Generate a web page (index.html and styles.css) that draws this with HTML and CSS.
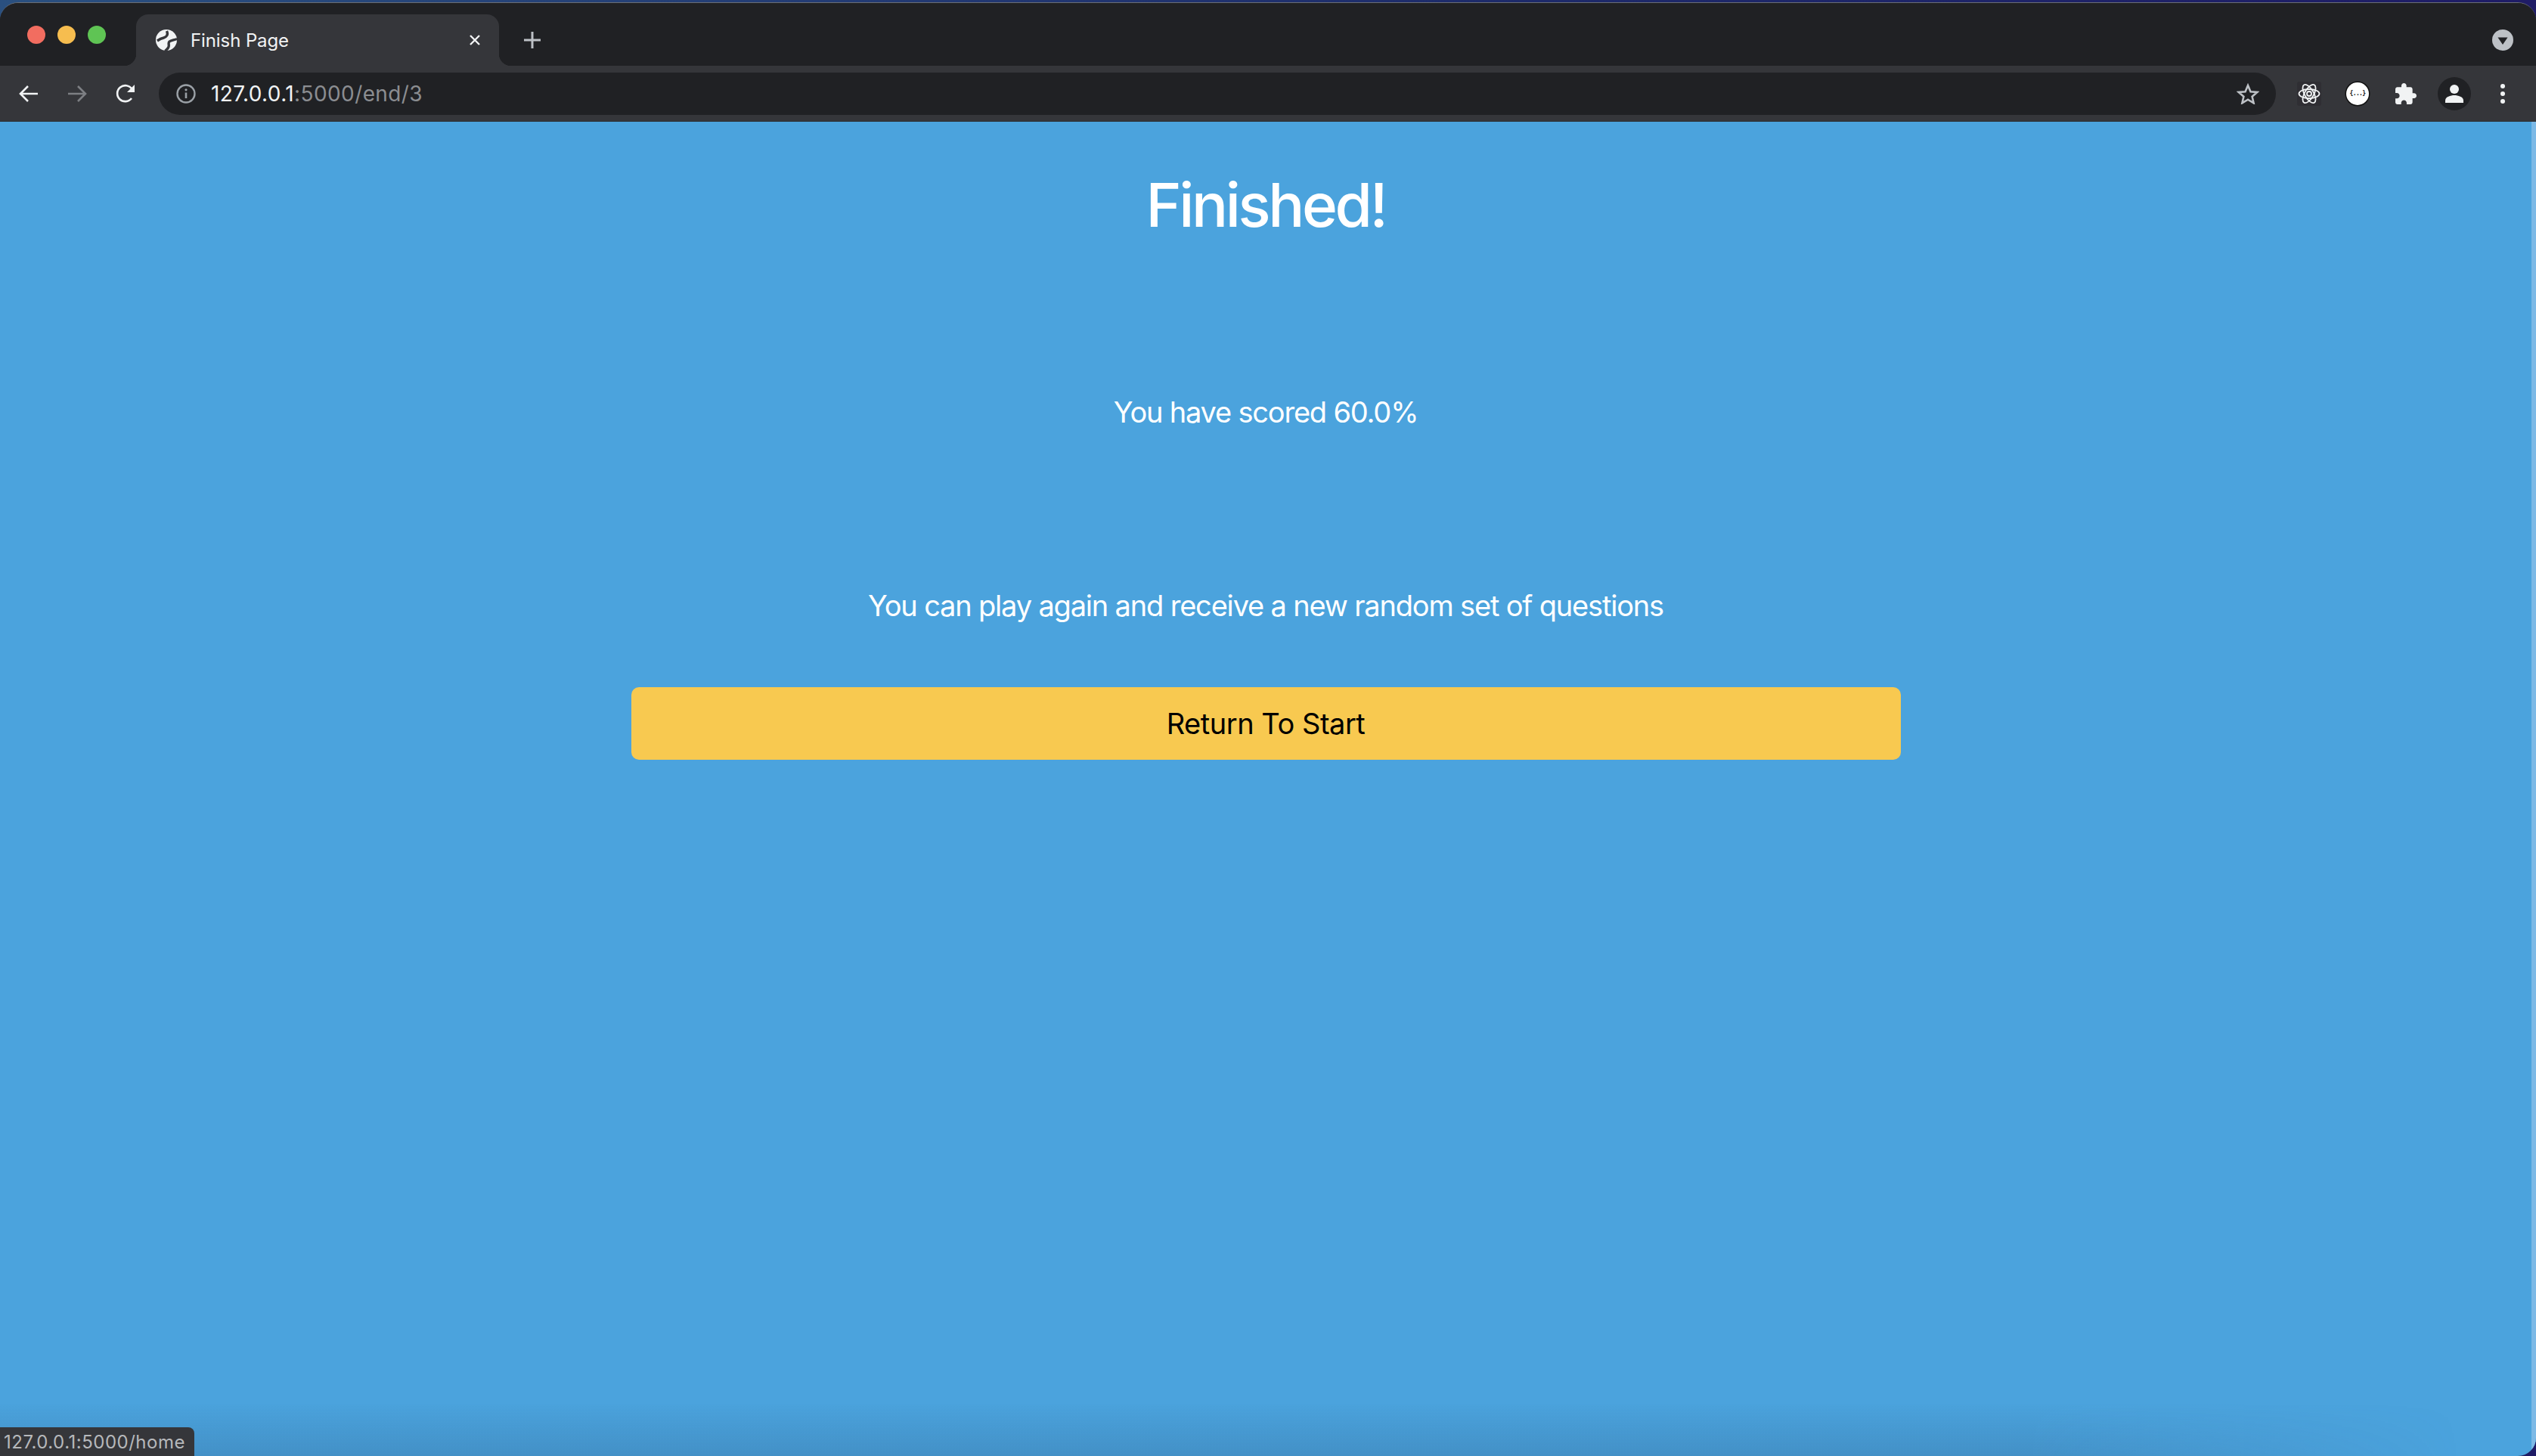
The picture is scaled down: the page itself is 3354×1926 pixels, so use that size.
FILE: index.html
```html
<!doctype html>
<html lang="en">
<head>
<meta charset="utf-8">
<title>Finish Page</title>
<link rel="stylesheet" href="styles.css">
</head>
<body>

<div class="window">

  <!-- ---------- tab strip ---------- -->
  <div class="tabstrip">
    <div class="lights">
      <span class="light red"></span>
      <span class="light yellow"></span>
      <span class="light green"></span>
    </div>
    <div class="tab">
      <svg class="globe" viewBox="0 0 28 28">
        <circle cx="14" cy="14" r="14" fill="#f1f3f4"/>
        <g stroke="#35363a" stroke-width="3.400" fill="none">
          <path d="M14.500 2C17 7 14 10 10.500 11 8 11.500 5.500 12.500 2 15"/>
          <path d="M28 12.500C24 14 20 14.500 18 16 16 18 18 20 17 23 16.500 25 15 26 12.500 28.500"/>
        </g>
      </svg>
      <span class="tab-title">Finish Page</span>
      <svg class="tab-close" viewBox="0 0 16 16">
        <path d="M2 2l12 12M14 2L2 14" stroke="#f1f3f4" stroke-width="2.400" fill="none"/>
      </svg>
    </div>
    <svg class="newtab" viewBox="0 0 24 24">
      <path d="M12 1v22M1 12h22" stroke="#bdc1c6" stroke-width="3" fill="none"/>
    </svg>
    <div class="tabsearch">
      <svg viewBox="0 0 28 28">
        <circle cx="14" cy="14" r="14" fill="#bdc1c6"/>
        <path d="M7.500 10.500h13L14 20z" fill="#202124"/>
      </svg>
    </div>
  </div>

  <!-- ---------- toolbar ---------- -->
  <div class="toolbar">
    <div class="navbtns">
      <svg class="navicon" viewBox="0 0 28 28">
        <path d="M26 14H4M13 4L3 14l10 10" stroke="#f1f3f4" stroke-width="2.600" fill="none"/>
      </svg>
      <svg class="navicon" viewBox="0 0 28 28">
        <path d="M2 14h22M15 4l10 10-10 10" stroke="#7d7f83" stroke-width="2.600" fill="none"/>
      </svg>
      <svg class="navicon" viewBox="0 0 28 28">
        <path d="M22 20a10.500 10.500 0 1 1 .5-12" stroke="#f1f3f4" stroke-width="2.600" fill="none"/>
        <path d="M26 2v10H16z" fill="#f1f3f4"/>
      </svg>
    </div>
    <div class="omnibox">
      <svg class="info" viewBox="0 0 26 26">
        <circle cx="13" cy="13" r="11.500" stroke="#9aa0a6" stroke-width="2.400" fill="none"/>
        <path d="M13 11.500v7.500" stroke="#9aa0a6" stroke-width="2.600"/>
        <circle cx="13" cy="7.800" r="1.600" fill="#9aa0a6"/>
      </svg>
      <span class="url"><span class="host">127.0.0.1</span>:5000/end/3</span>
      <svg class="star" viewBox="0 0 30 28">
        <path d="M15 3l3.500 8.200 8.800.7-6.700 5.800 2 8.600L15 21.700l-7.600 4.600 2-8.600L2.700 11.900l8.800-.7z" stroke="#bdc1c6" stroke-width="2.600" fill="none"/>
      </svg>
    </div>
    <div class="extensions">
      <div class="ext ext-react">
        <svg viewBox="0 0 32 32">
          <g stroke="#f1f3f4" stroke-width="1.800" fill="none">
            <ellipse cx="16" cy="16" rx="13.500" ry="6"/>
            <ellipse cx="16" cy="16" rx="13.500" ry="6" transform="rotate(60 16 16)"/>
            <ellipse cx="16" cy="16" rx="13.500" ry="6" transform="rotate(120 16 16)"/>
            <circle cx="16" cy="16" r="3"/>
          </g>
        </svg>
      </div>
      <div class="ext"><span class="json-badge">{...}</span></div>
      <div class="ext">
        <svg class="puzzle" viewBox="2 1 21 21">
          <path fill="#f1f3f4" d="M20.500 11H19V7c0-1.100-.9-2-2-2h-4V3.500C13 2.120 11.880 1 10.500 1S8 2.120 8 3.500V5H4c-1.100 0-1.990.9-1.990 2v3.800H3.500c1.490 0 2.700 1.210 2.700 2.700s-1.210 2.700-2.700 2.700H2V20c0 1.100.9 2 2 2h3.800v-1.500c0-1.490 1.210-2.700 2.700-2.700 1.490 0 2.700 1.210 2.700 2.700V22H17c1.100 0 2-.9 2-2v-4h1.500c1.380 0 2.500-1.120 2.500-2.500S21.880 11 20.500 11z"/>
        </svg>
      </div>
      <div class="ext">
        <div class="avatar">
          <svg viewBox="0 0 24 24">
            <circle cx="12" cy="6" r="6" fill="#f1f3f4"/>
            <path d="M0 24v-3c0-5 7-7 12-7s12 2 12 7v3z" fill="#f1f3f4"/>
          </svg>
        </div>
      </div>
      <div class="ext">
        <div class="dots"><i></i><i></i><i></i></div>
      </div>
    </div>
  </div>

  <!-- ---------- page ---------- -->
  <div class="page">
    <main class="content">
      <h1>Finished!</h1>
      <p class="score">You have scored 60.0%</p>
      <p class="again">You can play again and receive a new random set of questions</p>
      <a class="btn-start" href="#">Return To Start</a>
    </main>
    <div class="statusbubble">127.0.0.1:5000/home</div>
  </div>

</div>

</body>
</html>
```

FILE: styles.css
```css
*{box-sizing:border-box;margin:0;padding:0}
html,body{
  height:100%;
  overflow:hidden;
  font-family:Inter,"Liberation Sans",sans-serif;
  background:linear-gradient(90deg,#2a5080,#1d2a6a 60%,#1f1c66);
}
body{padding-top:3px}
svg{display:block}

.window{
  height:100%;
  display:flex;
  flex-direction:column;
  border-radius:24px 24px 24px 0;
  overflow:hidden;
  background:#202124;
  border-top:1px solid #6b6e73;
  position:relative;
}

/* tab strip */
.tabstrip{
  height:83px;
  flex:none;
  display:flex;
  align-items:flex-end;
  background:#202124;
}
.lights{
  width:180px;
  flex:none;
  height:100%;
  display:flex;
  gap:16px;
  padding:30px 0 0 36px;
}
.light{width:24px;height:24px;border-radius:50%}
.red{background:#f26d60}
.yellow{background:#f6bd4f}
.green{background:#5fc454}

.tab{
  width:480px;
  height:68px;
  flex:none;
  display:flex;
  align-items:center;
  padding:0 24px 0 26px;
  background:#35363a;
  border-radius:16px 16px 0 0;
  position:relative;
}
.tab::before,.tab::after{
  content:"";
  position:absolute;
  bottom:0;
  width:16px;
  height:16px;
}
.tab::before{left:-16px;background:radial-gradient(circle at 0 0,#202124 16px,#35363a 16.500px)}
.tab::after{right:-16px;background:radial-gradient(circle at 100% 0,#202124 16px,#35363a 16.500px)}
.globe{width:28px;height:28px;flex:none}
.tab-title{
  margin-left:18px;
  flex:1;
  font-size:24px;
  letter-spacing:-.1px;
  color:#f1f3f4;
}
.tab-close{width:16px;height:16px;flex:none}
.newtab{width:24px;height:24px;flex:none;margin:0 0 22px 32px}
.tabsearch{margin:0 30px 20px auto}
.tabsearch svg{width:28px;height:28px}

/* toolbar */
.toolbar{
  height:74px;
  flex:none;
  display:flex;
  align-items:center;
  background:#35363a;
  border-bottom:1px solid #2b2c2f;
}
.navbtns{
  width:210px;
  flex:none;
  display:flex;
  gap:36px;
  padding-left:24px;
}
.navicon{width:28px;height:28px;flex:none}
.omnibox{
  width:2800px;
  height:56px;
  flex:none;
  display:flex;
  align-items:center;
  padding:0 22px 0 23px;
  background:#202124;
  border-radius:28px;
}
.info{width:26px;height:26px;flex:none}
.url{
  margin-left:20px;
  flex:1;
  font-size:28px;
  letter-spacing:.4px;
  color:#8b8d91;
}
.host{color:#f1f3f4}
.star{width:30px;height:28px;flex:none}

.extensions{
  flex:1;
  display:flex;
  align-items:center;
  padding-left:12px;
}
.ext{
  width:64px;
  height:64px;
  flex:none;
  display:flex;
  align-items:center;
  justify-content:center;
}
.ext-react svg{
  width:32px;
  height:32px;
  background:#2f2e33;
  border-radius:3px;
}
.json-badge{
  width:30px;
  height:30px;
  display:flex;
  align-items:center;
  justify-content:center;
  border-radius:50%;
  background:#fff;
  box-shadow:0 0 0 1.500px #111;
  color:#111;
  font:bold 8px "DejaVu Sans Mono",monospace;
  letter-spacing:-.6px;
}
.puzzle{width:28px;height:28px}
.avatar{
  width:44px;
  height:44px;
  flex:none;
  display:flex;
  align-items:center;
  justify-content:center;
  border-radius:50%;
  background:#202124;
}
.avatar svg{width:24px;height:24px}
.dots{display:flex;flex-direction:column;gap:4px}
.dots i{width:6px;height:6px;border-radius:50%;background:#f1f3f4}

/* page */
.page{
  flex:1;
  position:relative;
  background:#4ba3dd;
  padding-right:6px;
  color:#fff;
}
.page::before{
  content:"";
  position:absolute;
  top:0;
  right:0;
  bottom:0;
  width:6px;
  background:#7cb9e6;
}
.page::after{
  content:"";
  position:absolute;
  left:0;
  right:0;
  bottom:0;
  height:70px;
  background:linear-gradient(rgba(40,80,120,0),rgba(40,80,120,.22));
  -webkit-mask-image:linear-gradient(90deg,#000 80%,transparent 97%);
  mask-image:linear-gradient(90deg,#000 80%,transparent 97%);
}
.content{
  width:1679px;
  margin:0 auto;
  display:flex;
  flex-direction:column;
  align-items:stretch;
  text-align:center;
}
h1{
  margin-top:62px;
  font-size:80px;
  line-height:96px;
  font-weight:500;
  letter-spacing:-3.400px;
}
.score{
  margin-top:196px;
  font-size:38px;
  line-height:60px;
  letter-spacing:-1.200px;
}
.again{
  margin-top:196px;
  font-size:38px;
  line-height:60px;
  letter-spacing:-1.180px;
}
.btn-start{
  margin-top:78px;
  height:96px;
  display:flex;
  align-items:center;
  justify-content:center;
  background:#f8c950;
  border-radius:10px;
  color:#000;
  font-size:38px;
  letter-spacing:-.47px;
  text-decoration:none;
}
.statusbubble{
  position:absolute;
  left:0;
  bottom:0;
  z-index:1;
  height:38px;
  width:257px;
  padding-left:5px;
  display:flex;
  align-items:center;
  background:#35363a;
  border-radius:0 8px 0 0;
  color:#b6b8bb;
  font-size:24px;
  letter-spacing:.5px;
}
```
